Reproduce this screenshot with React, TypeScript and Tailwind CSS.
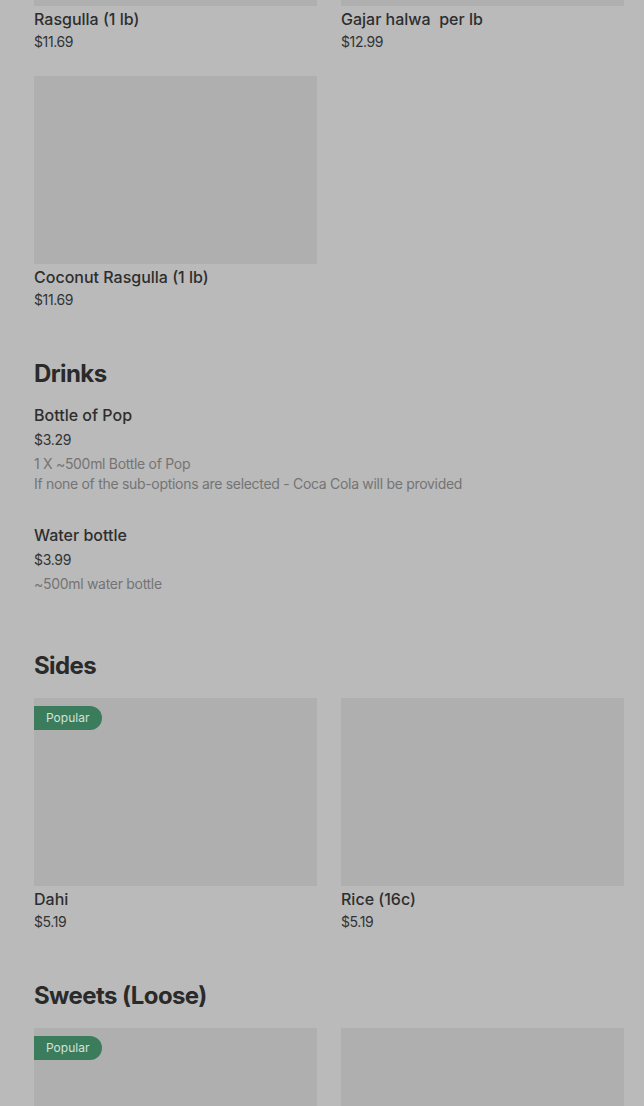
import React from "react";

type Card = { name?: string; price?: string; popular?: boolean };

function GridCard({ item }: { item: Card }) {
  return (
    <div className="flex flex-col">
      <div className="relative h-[188px] w-full bg-[#afafaf]">
        {item.popular && (
          <span className="absolute left-0 top-[8px] flex h-[24px] items-center rounded-r-full bg-[#3b7c5c] pl-[12px] pr-[13px] text-[12px] text-[#d3e2da]">
            Popular
          </span>
        )}
      </div>
      {item.name && (
        <>
          <div className="mt-[3px] text-[16px] font-medium leading-[20px] text-[#2e2e2e]">{item.name}</div>
          <div className="mt-[3px] text-[14px] leading-[20px] tracking-[-0.4px] text-[#333333]">{item.price}</div>
        </>
      )}
    </div>
  );
}

function ListItem({ name, price, desc }: { name: string; price: string; desc: string[] }) {
  return (
    <div className="flex flex-col">
      <div className="text-[16px] font-medium leading-[20px] text-[#2e2e2e]">{name}</div>
      <div className="mt-[5px] text-[14px] leading-[20px] tracking-[-0.3px] text-[#333333]">{price}</div>
      <div className="mt-[4px] text-[14px] leading-[20px] tracking-[-0.3px] text-[#747474]">
        {desc.map((d) => (
          <div key={d}>{d}</div>
        ))}
      </div>
    </div>
  );
}

function Heading({ children }: { children: React.ReactNode }) {
  return (
    <h2 className="text-[24px] font-bold leading-[32px] tracking-[-0.6px] text-[#2a2a2a]">{children}</h2>
  );
}

export default function App() {
  return (
    <div
      className="h-[1106px] w-[644px] overflow-hidden bg-[#bababa] pl-[34px] pr-[20px]"
      style={{ fontFamily: "Inter, 'Noto Sans', sans-serif" }}
    >
      <div className="-mt-[182px]">
        <div className="grid grid-cols-2 gap-x-[24px] gap-y-[24px]">
          <GridCard item={{ name: "Rasgulla (1 lb)", price: "$11.69" }} />
          <GridCard item={{ name: "Gajar halwa\u00a0 per lb", price: "$12.99" }} />
          <GridCard item={{ name: "Coconut Rasgulla (1 lb)", price: "$11.69" }} />
        </div>
      </div>

      <div className="mt-[48px]">
        <Heading>Drinks</Heading>
        <div className="mt-[15px] flex flex-col gap-[31px]">
          <ListItem
            name="Bottle of Pop"
            price="$3.29"
            desc={["1 X ~500ml Bottle of Pop", "If none of the sub-options are selected - Coca Cola will be provided"]}
          />
          <ListItem name="Water bottle" price="$3.99" desc={["~500ml water bottle"]} />
        </div>
      </div>

      <div className="mt-[56px]">
        <Heading>Sides</Heading>
        <div className="mt-[16px] grid grid-cols-2 gap-x-[24px] gap-y-[24px]">
          <GridCard item={{ name: "Dahi", price: "$5.19", popular: true }} />
          <GridCard item={{ name: "Rice (16c)", price: "$5.19" }} />
        </div>
      </div>

      <div className="mt-[48px]">
        <Heading>Sweets (Loose)</Heading>
        <div className="mt-[16px] grid grid-cols-2 gap-x-[24px] gap-y-[24px]">
          <GridCard item={{ popular: true }} />
          <GridCard item={{}} />
        </div>
      </div>
    </div>
  );
}
